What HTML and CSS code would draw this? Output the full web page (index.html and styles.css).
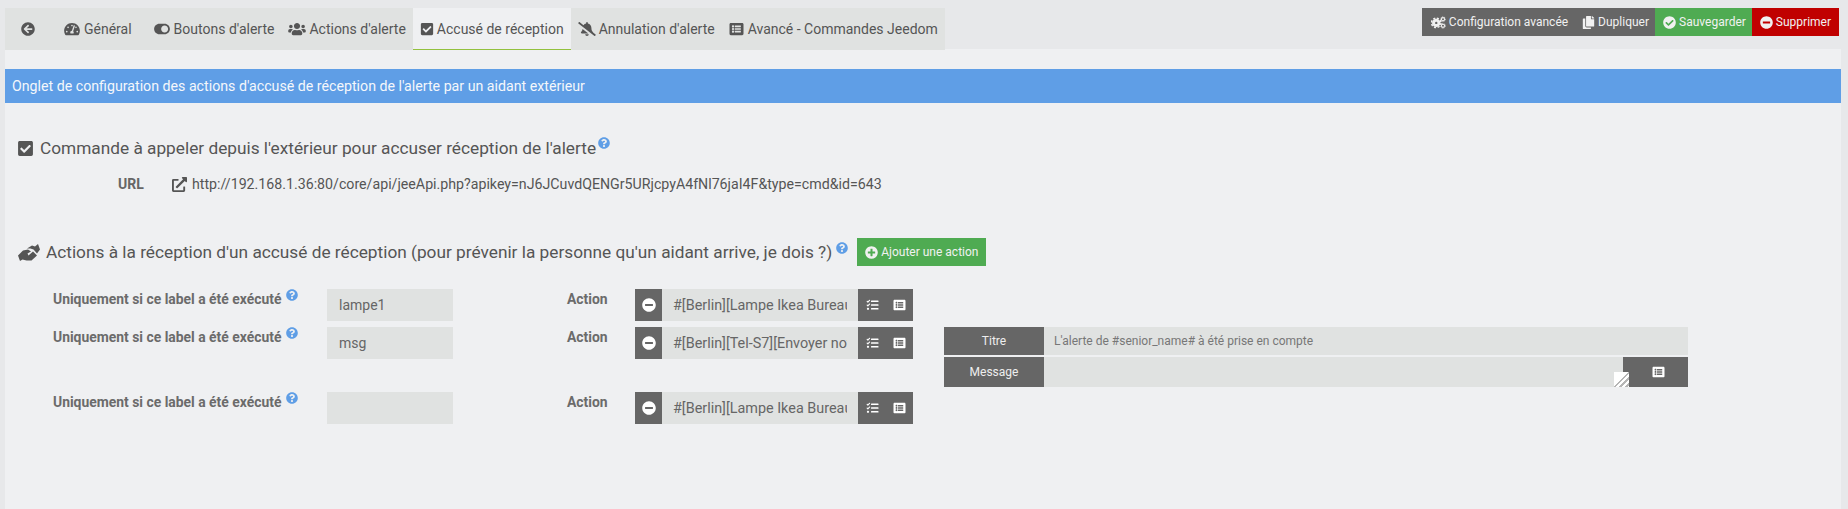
FILE: index.html
```html
<!DOCTYPE html>
<html lang="fr">
<head>
  <meta charset="UTF-8">
  <meta name="viewport" content="width=device-width, initial-scale=1.0">
  <title>Accusé de réception</title>
  <link rel="stylesheet" href="styles.css">
</head>
<body>
  <!-- Icones reutilisees -->
  <svg class="defs" aria-hidden="true">
    <symbol id="i-back" viewBox="0 0 512 512"><path d="M256 504C119 504 8 393 8 256S119 8 256 8s248 111 248 248-111 248-248 248zm28.9-143.6L209.4 288H392c13.3 0 24-10.7 24-24v-16c0-13.3-10.7-24-24-24H209.4l75.5-72.4c9.7-9.3 9.9-24.8.4-34.3l-11-10.9c-9.4-9.4-24.6-9.4-33.9 0L107.7 239c-9.4 9.4-9.4 24.6 0 33.9l132.7 132.7c9.4 9.4 24.6 9.4 33.9 0l11-10.9c9.5-9.5 9.3-25-.4-34.3z"/></symbol>
    <symbol id="i-gauge" viewBox="0 0 576 512"><path d="M288 32C128.94 32 0 160.94 0 320c0 52.8 14.25 102.26 39.06 144.8 5.61 9.62 16.3 15.2 27.44 15.2h443c11.14 0 21.83-5.58 27.44-15.2C561.75 422.26 576 372.8 576 320c0-159.06-128.94-288-288-288zm0 64c14.71 0 26.58 10.13 30.32 23.65-1.11 2.26-2.64 4.23-3.45 6.67l-9.22 27.67c-5.13 3.49-10.97 6.01-17.64 6.01-17.67 0-32-14.33-32-32S270.33 96 288 96zM96 384c-17.67 0-32-14.33-32-32s14.33-32 32-32 32 14.33 32 32-14.33 32-32 32zm48-160c-17.67 0-32-14.33-32-32s14.33-32 32-32 32 14.33 32 32-14.33 32-32 32zm246.77-72.41l-61.33 184C343.13 347.33 352 364.54 352 384c0 11.72-3.38 22.55-8.88 32H232.88c-5.5-9.45-8.88-20.28-8.88-32 0-33.94 26.5-61.43 59.9-63.59l61.34-184.01c4.17-12.56 17.73-19.45 30.36-15.17 12.57 4.19 19.35 17.79 15.17 30.36zm14.66 57.2l15.52-46.55c3.47-1.29 7.13-2.23 11.05-2.23 17.67 0 32 14.33 32 32s-14.33 32-32 32c-11.38-.01-20.89-6.28-26.57-15.22zM480 384c-17.67 0-32-14.33-32-32s14.33-32 32-32 32 14.33 32 32-14.33 32-32 32z"/></symbol>
    <symbol id="i-toggle" viewBox="0 0 576 512"><path d="M384 64H192C86 64 0 150 0 256s86 192 192 192h192c106 0 192-86 192-192S490 64 384 64zm0 320c-70.8 0-128-57.3-128-128 0-70.8 57.3-128 128-128 70.8 0 128 57.3 128 128 0 70.8-57.3 128-128 128z"/></symbol>
    <symbol id="i-users" viewBox="0 0 640 512"><path d="M96 224c35.3 0 64-28.7 64-64s-28.7-64-64-64-64 28.7-64 64 28.7 64 64 64zm448 0c35.3 0 64-28.7 64-64s-28.7-64-64-64-64 28.7-64 64 28.7 64 64 64zm32 32h-64c-17.6 0-33.5 7.1-45.1 18.6 40.3 22.1 68.9 62 75.1 109.4h66c17.7 0 32-14.3 32-32v-32c0-35.3-28.7-64-64-64zm-256 0c61.9 0 112-50.1 112-112S381.9 32 320 32 208 82.1 208 144s50.1 112 112 112zm76.8 32h-8.3c-20.8 10-43.9 16-68.5 16s-47.6-6-68.5-16h-8.3C179.6 288 128 339.6 128 403.2V432c0 26.5 21.5 48 48 48h288c26.5 0 48-21.5 48-48v-28.8c0-63.6-51.6-115.2-115.2-115.2zm-223.7-13.4C161.5 263.1 145.6 256 128 256H64c-35.3 0-64 28.7-64 64v32c0 17.7 14.3 32 32 32h65.9c6.3-47.4 34.9-87.3 75.2-109.4z"/></symbol>
    <symbol id="i-check" viewBox="0 0 448 512"><path d="M400 480H48c-26.51 0-48-21.49-48-48V80c0-26.51 21.49-48 48-48h352c26.51 0 48 21.49 48 48v352c0 26.51-21.49 48-48 48zm-204.686-98.059l184-184c6.248-6.248 6.248-16.379 0-22.627l-22.627-22.627c-6.248-6.248-16.379-6.249-22.628 0L184 302.745l-70.059-70.059c-6.248-6.248-16.379-6.248-22.628 0l-22.627 22.627c-6.248 6.248-6.248 16.379 0 22.627l104 104c6.249 6.25 16.379 6.25 22.628.001z"/></symbol>
    <symbol id="i-bell" viewBox="0 0 640 512"><path d="M633.82 458.1l-90.62-70.05c.19-1.38.8-2.66.8-4.05.05-7.55-2.61-15.27-8.61-21.71-19.32-20.76-55.47-51.99-55.47-154.29 0-77.7-54.48-139.9-127.94-155.16V32c0-17.67-14.32-32-31.98-32s-31.98 14.33-31.98 32v20.84c-40.33 8.38-74.66 31.07-97.59 62.57L45.47 3.37C38.49-2.05 28.43-.8 23.01 6.18L3.37 31.45C-2.05 38.42-.8 48.47 6.18 53.9l588.35 454.73c6.98 5.43 17.03 4.17 22.46-2.81l19.64-25.27c5.42-6.97 4.17-17.02-2.81-22.45zM157.23 251.54c-8.61 67.96-36.41 93.33-52.62 110.75-6 6.45-8.66 14.16-8.61 21.71.11 16.4 12.98 32 32.1 32h241.92L157.23 251.54zM320 512c35.32 0 63.97-28.65 63.97-64H256.03c0 35.35 28.65 64 63.97 64z"/></symbol>
    <symbol id="i-list" viewBox="0 0 512 512"><path d="M464 480H48c-26.51 0-48-21.49-48-48V80c0-26.51 21.49-48 48-48h416c26.51 0 48 21.49 48 48v352c0 26.51-21.49 48-48 48zM128 120c-22.091 0-40 17.909-40 40s17.909 40 40 40 40-17.909 40-40-17.909-40-40-40zm0 96c-22.091 0-40 17.909-40 40s17.909 40 40 40 40-17.909 40-40-17.909-40-40-40zm0 96c-22.091 0-40 17.909-40 40s17.909 40 40 40 40-17.909 40-40-17.909-40-40-40zm288-136v-32c0-6.627-5.373-12-12-12H204c-6.627 0-12 5.373-12 12v32c0 6.627 5.373 12 12 12h200c6.627 0 12-5.373 12-12zm0 96v-32c0-6.627-5.373-12-12-12H204c-6.627 0-12 5.373-12 12v32c0 6.627 5.373 12 12 12h200c6.627 0 12-5.373 12-12zm0 96v-32c0-6.627-5.373-12-12-12H204c-6.627 0-12 5.373-12 12v32c0 6.627 5.373 12 12 12h200c6.627 0 12-5.373 12-12z"/></symbol>
    <symbol id="i-tasks" viewBox="0 0 512 512"><path d="M139.61 35.5a12 12 0 0 0-17 0L58.93 98.81l-22.7-22.12a12 12 0 0 0-17 0L3.53 92.41a12 12 0 0 0 0 17l47.59 47.4a12.78 12.78 0 0 0 17.61 0l15.59-15.62L156.52 69a12.09 12.09 0 0 0 .09-17zm0 159.19a12 12 0 0 0-17 0l-63.68 63.72-22.7-22.1a12 12 0 0 0-17 0L3.53 252a12 12 0 0 0 0 17L51 316.5a12.77 12.77 0 0 0 17.6 0l15.7-15.69 72.2-72.22a12 12 0 0 0 .09-16.9zM64 368c-26.49 0-48.59 21.5-48.59 48S37.53 464 64 464a48 48 0 0 0 0-96zm432 16H208a16 16 0 0 0-16 16v32a16 16 0 0 0 16 16h288a16 16 0 0 0 16-16v-32a16 16 0 0 0-16-16zm0-320H208a16 16 0 0 0-16 16v32a16 16 0 0 0 16 16h288a16 16 0 0 0 16-16V80a16 16 0 0 0-16-16zm0 160H208a16 16 0 0 0-16 16v32a16 16 0 0 0 16 16h288a16 16 0 0 0 16-16v-32a16 16 0 0 0-16-16z"/></symbol>
    <symbol id="i-minus" viewBox="0 0 512 512"><path d="M256 8C119 8 8 119 8 256s111 248 248 248 248-111 248-248S393 8 256 8zM124 296c-6.6 0-12-5.4-12-12v-56c0-6.6 5.4-12 12-12h264c6.6 0 12 5.4 12 12v56c0 6.6-5.4 12-12 12H124z"/></symbol>
    <symbol id="i-plus" viewBox="0 0 512 512"><path d="M256 8C119 8 8 119 8 256s111 248 248 248 248-111 248-248S393 8 256 8zm144 276c0 6.6-5.4 12-12 12h-92v92c0 6.6-5.4 12-12 12h-56c-6.6 0-12-5.4-12-12v-92h-92c-6.6 0-12-5.4-12-12v-56c0-6.6 5.4-12 12-12h92v-92c0-6.6 5.4-12 12-12h56c6.6 0 12 5.4 12 12v92h92c6.6 0 12 5.4 12 12v56z"/></symbol>
    <symbol id="i-ok" viewBox="0 0 512 512"><path d="M504 256c0 136.967-111.033 248-248 248S8 392.967 8 256 119.033 8 256 8s248 111.033 248 248zM227.314 387.314l184-184c6.248-6.248 6.248-16.379 0-22.627l-22.627-22.627c-6.248-6.249-16.379-6.249-22.628 0L216 308.118l-70.059-70.059c-6.248-6.248-16.379-6.248-22.628 0l-22.627 22.627c-6.248 6.248-6.248 16.379 0 22.627l104 104c6.249 6.25 16.379 6.25 22.628.001z"/></symbol>
    <symbol id="i-help" viewBox="0 0 512 512"><path d="M504 256c0 136.997-111.043 248-248 248S8 392.997 8 256C8 119.083 119.043 8 256 8s248 111.083 248 248zM262.655 90c-54.497 0-89.255 22.957-116.549 63.758-3.536 5.286-2.353 12.415 2.715 16.258l34.699 26.31c5.205 3.947 12.621 3.008 16.665-2.122 17.864-22.658 30.113-35.797 57.303-35.797 20.429 0 45.698 13.148 45.698 32.958 0 14.976-12.363 22.667-32.534 33.976C247.128 238.528 216 254.941 216 296v4c0 6.627 5.373 12 12 12h56c6.627 0 12-5.373 12-12v-1.333c0-28.462 83.186-29.647 83.186-106.667 0-58.002-60.165-102-116.531-102zM256 338c-25.365 0-46 20.635-46 46 0 25.364 20.635 46 46 46s46-20.636 46-46c0-25.365-20.635-46-46-46z"/></symbol>
    <symbol id="i-copy" viewBox="0 0 448 512"><path d="M320 448v40c0 13.255-10.745 24-24 24H24c-13.255 0-24-10.745-24-24V120c0-13.255 10.745-24 24-24h72v296c0 30.879 25.121 56 56 56h168zm0-344V0H152c-13.255 0-24 10.745-24 24v368c0 13.255 10.745 24 24 24h272c13.255 0 24-10.745 24-24V128H344c-13.2 0-24-10.8-24-24zm120.971-31.029L375.029 7.029A24 24 0 0 0 358.059 0H352v96h96v-6.059a24 24 0 0 0-7.029-16.97z"/></symbol>
    <symbol id="i-link" viewBox="0 0 512 512"><path d="M432 320h-32a16 16 0 0 0-16 16v112H64V128h144a16 16 0 0 0 16-16V80a16 16 0 0 0-16-16H48a48 48 0 0 0-48 48v352a48 48 0 0 0 48 48h352a48 48 0 0 0 48-48V336a16 16 0 0 0-16-16zM488 0H360c-21.37 0-32.05 25.91-17 41l35.73 35.73L135 320.37a24 24 0 0 0 0 34L157.67 377a24 24 0 0 0 34 0l243.61-243.68L471 169c15 15 41 4.5 41-17V24a24 24 0 0 0-24-24z"/></symbol>
    <symbol id="i-cogs" viewBox="0 0 20 16">
      <circle cx="7" cy="8.5" r="3.6" fill="none" stroke="currentColor" stroke-width="4"/>
      <circle cx="7" cy="8.5" r="6.3" fill="none" stroke="currentColor" stroke-width="2" stroke-dasharray="2.8 2.15"/>
      <circle cx="16" cy="3.6" r="2.1" fill="none" stroke="currentColor" stroke-width="1.5"/>
      <circle cx="16" cy="3.6" r="3.2" fill="none" stroke="currentColor" stroke-width="1" stroke-dasharray="1.4 1.1"/>
      <circle cx="16" cy="12.4" r="2.1" fill="none" stroke="currentColor" stroke-width="1.5"/>
      <circle cx="16" cy="12.4" r="3.2" fill="none" stroke="currentColor" stroke-width="1" stroke-dasharray="1.4 1.1"/>
    </symbol>
    <symbol id="i-hands" viewBox="0 0 22 17"><path d="M0 11.5 5 6.5 10 5.5 13 7.5 9.5 9.5 10.5 11.5 15 7.5 19 11.5 13.5 16.5 8.5 16.5 4.5 15.5 2 17zM9 4.5 14 1.5 17 2.5 20 0 22 5.5 19 9.5 15.5 5.5 12.5 4.5z"/></symbol>
  </svg>

  <header class="topbar">
    <nav class="tabs">
      <a class="tab tab-back"><svg class="ico"><use href="#i-back"/></svg></a>
      <a class="tab tab-general"><svg class="ico ico-wide"><use href="#i-gauge"/></svg>Général</a>
      <a class="tab"><svg class="ico ico-wide"><use href="#i-toggle"/></svg>Boutons d'alerte</a>
      <a class="tab"><svg class="ico ico-wide"><use href="#i-users"/></svg>Actions d'alerte</a>
      <a class="tab active"><svg class="ico"><use href="#i-check"/></svg>Accusé de réception</a>
      <a class="tab"><svg class="ico ico-wide"><use href="#i-bell"/></svg>Annulation d'alerte</a>
      <a class="tab tab-advanced"><svg class="ico"><use href="#i-list"/></svg>Avancé - Commandes Jeedom</a>
    </nav>
    <div class="actions">
      <a class="btn btn-gray btn-config"><svg class="ico ico-cogs"><use href="#i-cogs"/></svg>Configuration avancée</a>
      <a class="btn btn-gray btn-dup"><svg class="ico"><use href="#i-copy"/></svg>Dupliquer</a>
      <a class="btn btn-green"><svg class="ico"><use href="#i-ok"/></svg>Sauvegarder</a>
      <a class="btn btn-red"><svg class="ico"><use href="#i-minus"/></svg>Supprimer</a>
    </div>
  </header>

  <main class="content">
    <div class="banner">Onglet de configuration des actions d'accusé de réception de l'alerte par un aidant extérieur</div>

    <h3 class="title title-first">
      <svg class="ico title-ico"><use href="#i-check"/></svg>
      Commande à appeler depuis l'extérieur pour accuser réception de l'alerte
      <svg class="help help-title"><use href="#i-help"/></svg>
    </h3>
    <div class="url-row">
      <span class="url-label">URL</span>
      <svg class="ico url-ico"><use href="#i-link"/></svg>
      <span class="url-text">http://192.168.1.36:80/core/api/jeeApi.php?apikey=nJ6JCuvdQENGr5URjcpyA4fNl76jaI4F&amp;type=cmd&amp;id=643</span>
    </div>

    <div class="title title-second">
      <svg class="ico hands-ico"><use href="#i-hands"/></svg>
      <h3>Actions à la réception d'un accusé de réception (pour prévenir la personne qu'un aidant arrive, je dois ?)</h3>
      <svg class="help help-title"><use href="#i-help"/></svg>
      <a class="btn btn-green btn-add"><svg class="ico"><use href="#i-plus"/></svg>Ajouter une action</a>
    </div>

    <div class="rows">
      <div class="row">
        <label class="lbl lbl-label">Uniquement si ce label a été exécuté <svg class="help"><use href="#i-help"/></svg></label>
        <input class="field field-label" type="text" value="lampe1">
        <label class="lbl lbl-action">Action</label>
        <div class="group">
          <span class="addon addon-minus"><svg class="ico"><use href="#i-minus"/></svg></span>
          <input class="field field-cmd" type="text" value="#[Berlin][Lampe Ikea Bureau][On]#">
          <span class="addon addon-end"><svg class="ico"><use href="#i-tasks"/></svg><svg class="ico"><use href="#i-list"/></svg></span>
        </div>
      </div>

      <div class="row row-msg">
        <label class="lbl lbl-label">Uniquement si ce label a été exécuté <svg class="help"><use href="#i-help"/></svg></label>
        <input class="field field-label" type="text" value="msg">
        <label class="lbl lbl-action">Action</label>
        <div class="group">
          <span class="addon addon-minus"><svg class="ico"><use href="#i-minus"/></svg></span>
          <input class="field field-cmd" type="text" value="#[Berlin][Tel-S7][Envoyer notification]#">
          <span class="addon addon-end"><svg class="ico"><use href="#i-tasks"/></svg><svg class="ico"><use href="#i-list"/></svg></span>
        </div>
        <div class="options">
          <div class="opt opt-title">
            <span class="opt-name">Titre</span>
            <input class="field field-opt" type="text" value="L'alerte de #senior_name# à été prise en compte">
          </div>
          <div class="opt opt-msg">
            <span class="opt-name">Message</span>
            <div class="msg-box">
              <textarea class="field field-msg"></textarea>
              <span class="resizer"></span>
            </div>
            <span class="addon addon-msg"><svg class="ico"><use href="#i-list"/></svg></span>
          </div>
        </div>
      </div>

      <div class="row">
        <label class="lbl lbl-label">Uniquement si ce label a été exécuté <svg class="help"><use href="#i-help"/></svg></label>
        <input class="field field-label" type="text" value="">
        <label class="lbl lbl-action">Action</label>
        <div class="group">
          <span class="addon addon-minus"><svg class="ico"><use href="#i-minus"/></svg></span>
          <input class="field field-cmd" type="text" value="#[Berlin][Lampe Ikea Bureau][Off]#">
          <span class="addon addon-end"><svg class="ico"><use href="#i-tasks"/></svg><svg class="ico"><use href="#i-list"/></svg></span>
        </div>
      </div>
    </div>
  </main>
</body>
</html>
```

FILE: styles.css
```css
* {
  box-sizing: border-box;
}

html, body {
  height: 100%;
  overflow: hidden;
}

body {
  margin: 0;
  background-color: #e7e8ea;
  color: #555;
  font-family: Roboto, "Liberation Sans", sans-serif;
  font-size: 14px;
}

.defs {
  display: none;
}

.ico {
  width: 14px;
  height: 14px;
  fill: currentColor;
  flex: none;
}

.ico-wide {
  width: 18px;
}

/* Barre du haut */
.topbar {
  display: flex;
  justify-content: space-between;
  align-items: flex-start;
  height: 49px;
  padding: 8px 9px 0 5px;
}

.tabs {
  display: flex;
  height: 42px;
  background-color: #e0e2e1;
  position: relative;
  z-index: 1;
}

.tab {
  display: flex;
  align-items: center;
  gap: 3px;
  padding: 0 7px;
  color: #555;
  white-space: nowrap;
}

.tab-back {
  padding: 0 21px 0 16px;
}

.tab-general {
  padding-right: 14px;
}

.tab-advanced {
  gap: 4px;
}

.tab-advanced .ico {
  width: 15px;
}

.tab.active {
  background-color: #eff0f2;
  border-bottom: 1px solid #93c13f;
  padding-top: 1px;
}

.actions {
  display: flex;
}

.btn {
  display: flex;
  align-items: center;
  gap: 3px;
  height: 28px;
  padding: 0 6px 0 8px;
  color: #f1f1f1;
  font-size: 12px;
  white-space: nowrap;
}

.btn .ico {
  width: 13px;
  height: 13px;
}

.btn .ico-cogs {
  width: 15px;
}

.btn-config {
  padding: 0 7px 0 9px;
}

.btn-dup {
  padding: 0 6px 0 7px;
}

.btn-gray {
  background-color: #666;
}

.btn-green {
  background-color: #4fab52;
}

.btn-red {
  background-color: #c00000;
  padding-right: 8px;
}

/* Contenu */
.content {
  margin: 0 7px 0 5px;
  padding-top: 20px;
  height: 460px;
  background-color: #eff0f2;
}

.banner {
  height: 34px;
  padding-left: 7px;
  background-color: #5f9ee6;
  color: #f4f7fb;
  font-size: 14.2px;
  line-height: 34px;
}

.title {
  display: flex;
  align-items: center;
  margin: 0;
  color: #555;
  font-size: 17.25px;
  font-weight: 400;
}

.title h3 {
  margin: 0;
  font-size: 17.25px;
  font-weight: 400;
}

.title-first {
  margin: 33px 0 0 13px;
  height: 24px;
  gap: 7px;
}

.title-ico {
  width: 15px;
  height: 17px;
}

.help {
  width: 12px;
  height: 12px;
  fill: #5f9ee6;
  flex: none;
}

.help-title {
  margin: -10px 0 0 -5px;
}

.url-row {
  display: flex;
  align-items: center;
  margin: 14px 0 0 113px;
  height: 20px;
  gap: 4px;
  font-size: 14.2px;
}

.url-label {
  width: 50px;
  font-weight: 700;
  color: #666;
  font-size: 14px;
}

.url-ico {
  width: 15px;
  height: 15px;
}

.url-text {
  margin-left: 1px;
}

.title-second {
  margin: 44px 0 0 13px;
  height: 28px;
}

.hands-ico {
  width: 22px;
  height: 17px;
  margin-right: 6px;
}

.title-second .help-title {
  margin: -9px 0 0 4px;
}

.btn-add {
  margin-left: 9px;
  padding: 0 8px;
}

/* Lignes d'actions */
.rows {
  display: flex;
  flex-direction: column;
  gap: 5px;
  margin: 23px 0 0 48px;
}

.row {
  display: flex;
  align-items: flex-start;
  height: 32px;
}

.row-msg {
  height: 60px;
  margin-top: 1px;
}

.lbl {
  color: #6b6b6b;
  font-size: 13.9px;
  font-weight: 700;
  line-height: 20px;
  white-space: nowrap;
}

.lbl-label {
  display: flex;
  gap: 5px;
  width: 274px;
}

.lbl-action {
  width: 68px;
}

.field {
  border: 0;
  outline: 0;
  background-color: #e0e2e1;
  color: #666;
  font-family: inherit;
  font-size: 14px;
}

.field-label {
  width: 126px;
  height: 32px;
  margin-right: 114px;
  padding: 0 12px;
}

.group {
  display: flex;
  width: 278px;
  height: 32px;
}

.addon {
  display: flex;
  align-items: center;
  justify-content: center;
  background-color: #666;
  color: #fff;
}

.addon-minus {
  width: 27px;
}

.field-cmd {
  width: 196px;
  padding: 0 11px;
  font-size: 14.4px;
}

.addon-end {
  width: 55px;
  gap: 14px;
}

.addon-end .ico,
.addon-msg .ico {
  width: 13px;
  height: 12px;
}

/* Options du message */
.options {
  display: flex;
  flex-direction: column;
  gap: 2px;
  width: 744px;
  margin-left: 31px;
}

.opt {
  display: flex;
}

.opt-title {
  height: 28px;
}

.opt-msg {
  height: 30px;
}

.opt-name {
  display: flex;
  align-items: center;
  justify-content: center;
  width: 100px;
  background-color: #666;
  color: #eee;
  font-size: 12px;
}

.field-opt {
  flex: 1;
  padding: 0 10px;
  font-size: 12px;
  color: #777;
}

.msg-box {
  position: relative;
  display: flex;
  width: 585px;
  background-color: #666;
}

.field-msg {
  width: 579px;
  height: 30px;
  resize: none;
}

.resizer {
  position: absolute;
  right: 0;
  bottom: 0;
  width: 15px;
  height: 15px;
  background:
    linear-gradient(135deg, #fff 0 42%, transparent 42%),
    repeating-linear-gradient(135deg, #fff 0 2px, #b5b5b5 2px 4px);
}

.addon-msg {
  width: 59px;
}
```
